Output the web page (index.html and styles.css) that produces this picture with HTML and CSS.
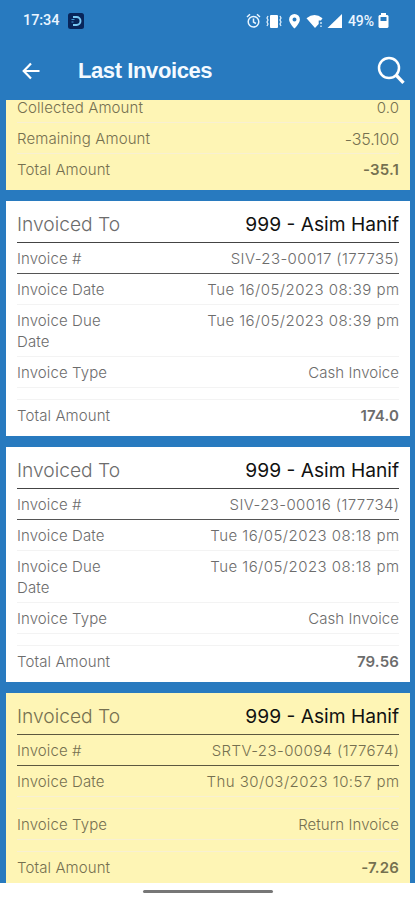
FILE: index.html
```html
<!DOCTYPE html>
<html lang="en">
<head>
<meta charset="utf-8">
<title>Last Invoices</title>
<link rel="stylesheet" href="styles.css">
</head>
<body>
<div class="status">
  <span class="clock">17:34</span>
  <svg class="app" width="16" height="16" viewBox="0 0 16 16"><rect width="16" height="16" rx="2.500" fill="#08255a"/><path d="M5 4h3.500a4 4 0 0 1 0 8H5" fill="none" stroke="#78c8f4" stroke-width="1.900"/><path d="M3.500 6.500h3M3.500 9h2" stroke="#469bd8" stroke-width="1"/></svg>
  <svg class="icons" width="98" height="18" viewBox="0 0 98 18">
    <g fill="none" stroke="#e9f5ff" stroke-width="1.500"><circle cx="7.500" cy="9.700" r="5.300"/><path d="M1 5l3-2.700M14 5l-3-2.700M7.500 6.500v3.500l2.400 1.500"/></g>
    <rect x="24" y="3" width="8" height="13" rx="1" fill="#fff"/><path d="M22 4l-1 2 1 2-1 2 1 2-1 2M34 4l1 2-1 2 1 2-1 2 1 2" fill="none" stroke="#d8ebfa" stroke-width="1.300"/>
    <path fill="#fff" fill-rule="evenodd" d="M48.500 2a5.400 5.400 0 0 0-5.400 5.400c0 3.900 5.400 9 5.400 9s5.400-5.100 5.400-9A5.400 5.400 0 0 0 48.500 2zm0 3.500a2 2 0 1 1 0 4 2 2 0 0 1 0-4z"/>
    <path fill="#fff" d="M60.500 6.200q8-6.500 16 0L75 8.600h-2.300v3.500L69 16z"/><path d="M75 10v2M75 13.500v1.500" stroke="#d8ebfa" stroke-width="1.400"/>
    <path fill="#fff" d="M96 2v14H81.500z"/>
  </svg>
  <span class="percent">49%</span>
  <svg class="battery" width="11" height="15" viewBox="0 0 11 15"><path fill="#fff" fill-rule="evenodd" d="M3 0h5v2h1.500l1 1v11l-1 1h-8l-1-1V3l1-1H3zM2.500 4v4h6V4z"/></svg>
</div>
<header class="bar">
  <svg class="back" width="19" height="18" viewBox="0 0 19 18"><path d="M9 1.500L1.700 9 9 16.500M2 9h15.500" fill="none" stroke="#fff" stroke-width="2.200"/></svg>
  <h1>Last Invoices</h1>
  <svg class="search" width="28" height="29" viewBox="0 0 28 29"><circle cx="12" cy="12" r="10" fill="none" stroke="#fff" stroke-width="2.500"/><path d="M19 19l7.500 7.800" stroke="#fff" stroke-width="3.300"/></svg>
</header>
<main class="list">
  <section class="card return partial">
    <div class="row"><span class="label">Collected Amount</span><span class="value">0.0</span></div>
    <div class="row"><span class="label">Remaining Amount</span><span class="value">-35.100</span></div>
    <div class="row total"><span class="label">Total Amount</span><b class="value">-35.1</b></div>
  </section>
  <section class="card">
    <div class="row head"><span class="label">Invoiced To</span><span class="value">999 - Asim Hanif</span></div>
    <div class="row strong"><span class="label">Invoice #</span><span class="value number">SIV-23-00017 (177735)</span></div>
    <div class="row"><span class="label">Invoice Date</span><span class="value date">Tue 16/05/2023 08:39 pm</span></div>
    <div class="row due"><span class="label">Invoice Due Date</span><span class="value date">Tue 16/05/2023 08:39 pm</span></div>
    <div class="row"><span class="label">Invoice Type</span><span class="value">Cash Invoice</span></div>
    <div class="spacer"></div>
    <div class="row total"><span class="label">Total Amount</span><b class="value">174.0</b></div>
  </section>
  <section class="card">
    <div class="row head"><span class="label">Invoiced To</span><span class="value">999 - Asim Hanif</span></div>
    <div class="row strong"><span class="label">Invoice #</span><span class="value number">SIV-23-00016 (177734)</span></div>
    <div class="row"><span class="label">Invoice Date</span><span class="value date">Tue 16/05/2023 08:18 pm</span></div>
    <div class="row due"><span class="label">Invoice Due Date</span><span class="value date">Tue 16/05/2023 08:18 pm</span></div>
    <div class="row"><span class="label">Invoice Type</span><span class="value">Cash Invoice</span></div>
    <div class="spacer"></div>
    <div class="row total"><span class="label">Total Amount</span><b class="value">79.56</b></div>
  </section>
  <section class="card return last">
    <div class="row head"><span class="label">Invoiced To</span><span class="value">999 - Asim Hanif</span></div>
    <div class="row strong"><span class="label">Invoice #</span><span class="value number">SRTV-23-00094 (177674)</span></div>
    <div class="row"><span class="label">Invoice Date</span><span class="value date">Thu 30/03/2023 10:57 pm</span></div>
    <div class="spacer"></div>
    <div class="row"><span class="label">Invoice Type</span><span class="value">Return Invoice</span></div>
    <div class="spacer"></div>
    <div class="row total"><span class="label">Total Amount</span><b class="value">-7.26</b></div>
  </section>
</main>
<footer class="nav"><div class="handle"></div></footer>
</body>
</html>
```
FILE: styles.css
```css
* { box-sizing: border-box; }
body {
  margin: 0;
  width: 415px;
  height: 900px;
  overflow: hidden;
  display: flex;
  flex-direction: column;
  background: #287abf;
  font-family: Inter, "Liberation Sans", sans-serif;
  color: #6c6c6c;
}
svg { display: block; flex: none; }
.status {
  height: 41px;
  flex: none;
  display: flex;
  align-items: center;
  padding: 0 26px 0 23px;
  color: #eaf5ff;
  font: 500 14.5px Roboto, sans-serif;
}
.clock { width: 45px; letter-spacing: -.1px; }
.icons { margin-left: auto; }
.percent { margin: 0 4px; font-size: 14px; width: 26px; letter-spacing: -.1px; }
.bar {
  height: 59px;
  flex: none;
  display: flex;
  align-items: center;
  padding: 0 10px 0 22px;
}
h1 {
  margin: 0 auto 0 37px;
  font: bold 22px "Liberation Sans", sans-serif;
  letter-spacing: -.4px;
  color: #f4faff;
}
.list {
  height: 783px;
  flex: none;
  overflow: hidden;
  padding: 0 5px 0 6px;
  display: flex;
  flex-direction: column;
  gap: 11px;
}
.card {
  flex: none;
  height: 235px;
  padding: 0 11px;
  background: #fff;
}
.return { background: #fef5b5; color: #757050; }
.last { height: 190px; }
.partial { height: 90px; }
.row {
  height: 31px;
  display: flex;
  align-items: center;
  justify-content: space-between;
  padding-top: 2px;
  border-bottom: 1px solid #f3f3f3;
  font-size: 15px;
  font-weight: 300;
  line-height: 20.5px;
  white-space: nowrap;
}
.return .row, .return .spacer { border-color: #f8f0d2; }
.partial .row:first-child { height: 23px; line-height: 15px; align-items: flex-start; padding-top: 0; }
.label { letter-spacing: .1px; }
.partial .row:nth-child(2) .value { font-size: 16px; letter-spacing: -.1px; }
.value { letter-spacing: .06px; }
.number { letter-spacing: .4px; margin-right: -.4px; }
.date { letter-spacing: .45px; margin-right: -.45px; }
.row.head {
  height: 42px;
  padding-top: 5px;
  border-color: #444;
  font-size: 19.2px;
}
.head .label { letter-spacing: 0; }
.head .value { color: #111; font-weight: 400; letter-spacing: 0; }
.row.strong { border-color: #555; }
.return .row.head, .return .row.strong { border-color: #5c583f; }
.row.due { height: 52px; align-items: flex-start; padding-top: 6px; }
.due .label { width: 100px; white-space: normal; }
.spacer { height: 12px; border-bottom: 1px solid #f3f3f3; }
.row.total, .return .row.total { border-bottom: 0; height: 31px; }
b.value { font-weight: 600; letter-spacing: .15px; }
.nav {
  flex: 1;
  background: #fff;
  padding-top: 7px;
}
.handle {
  width: 130px;
  height: 3px;
  margin-left: 143px;
  border-radius: 2px;
  background: #777;
}
```
